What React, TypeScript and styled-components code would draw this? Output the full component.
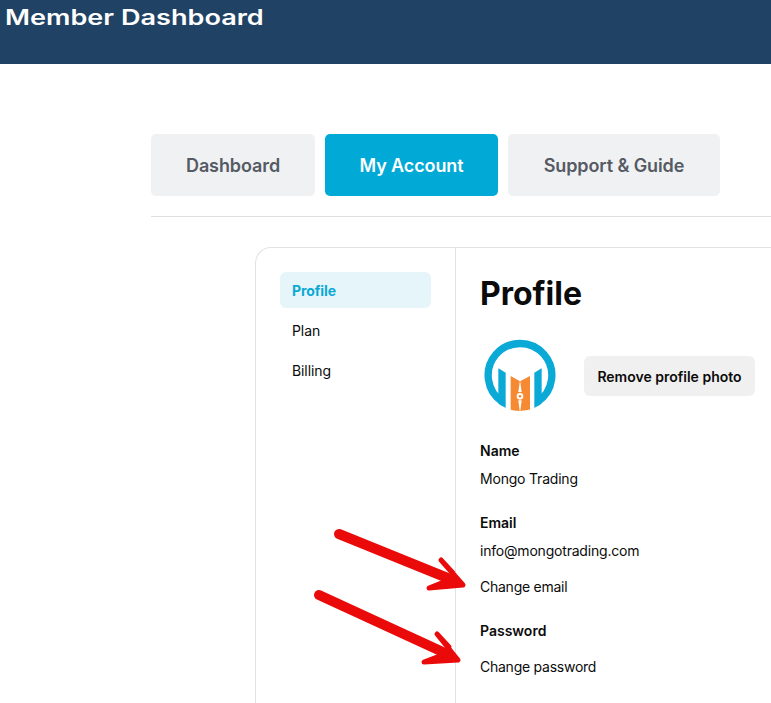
import styled, { createGlobalStyle } from 'styled-components'

const GlobalStyle = createGlobalStyle`
  html, body {
    margin: 0;
    padding: 0;
    background: #fff;
    overflow: hidden;
    font-family: Inter, "Liberation Sans", sans-serif;
  }
`
const Page = styled.div`
  position: relative;
  width: 771px;
  height: 703px;
  overflow: hidden;
`
const Header = styled.header`
  height: 64px;
  box-sizing: border-box;
  padding: 4px 0 0 5px;
  background-color: #1f4265;
`
const Title = styled.h1`
  margin: 0;
  font-family: Inter, sans-serif;
  font-size: 21px;
  line-height: 27px;
  font-weight: 600;
  color: #fff;
  white-space: nowrap;
  transform: scaleX(1.29);
  transform-origin: left center;
`
const Main = styled.main`
  padding: 70px 0 0 151px;
`
const Tabs = styled.nav`
  display: flex;
  gap: 10px;
  padding-bottom: 20px;
  border-bottom: 1px solid #dfdfdf;
`
const Tab = styled.a<{ $active?: boolean; $width: number }>`
  width: ${(p) => p.$width}px;
  height: 62px;
  display: flex;
  align-items: center;
  justify-content: center;
  border-radius: 5px;
  font-size: 18px;
  font-weight: 600;
  letter-spacing: -0.1px;
  background-color: ${(p) => (p.$active ? '#00a9d6' : '#f0f1f3')};
  color: ${(p) => (p.$active ? '#fff' : '#555a63')};
`
const Card = styled.section`
  display: flex;
  margin: 30px 0 0 104px;
  height: 500px;
  border: 1px solid #e2e2e2;
  border-right: 0;
  border-radius: 16px 0 0 0;
`
const Sidebar = styled.aside`
  width: 200px;
  flex-shrink: 0;
  box-sizing: border-box;
  padding: 24px 24px 0 24px;
  border-right: 1px solid #e2e2e2;
  display: flex;
  flex-direction: column;
  gap: 4px;
`
const SideItem = styled.a<{ $active?: boolean }>`
  height: 36px;
  display: flex;
  align-items: center;
  padding-left: 12px;
  border-radius: 6px;
  font-size: 14px;
  font-weight: ${(p) => (p.$active ? 700 : 400)};
  letter-spacing: -0.1px;
  color: ${(p) => (p.$active ? '#0aa9d4' : '#0b0b0b')};
  background-color: ${(p) => (p.$active ? '#e6f5fa' : 'transparent')};
`
const Content = styled.div`
  padding: 25px 0 0 24px;
`
const Heading = styled.h2`
  margin: 0;
  font-size: 32px;
  line-height: 42px;
  font-weight: 700;
  color: #0b0b0b;
`
const PhotoRow = styled.div`
  display: flex;
  align-items: center;
  gap: 24px;
  margin: 21px 0 25px;
`
const Logo = styled.svg`
  width: 80px;
  height: 80px;
  display: block;
`
const RemoveButton = styled.button`
  height: 40px;
  width: 171px;
  padding: 0;
  border: 0;
  border-radius: 6px;
  background-color: #f0f0f0;
  font-family: inherit;
  font-size: 14px;
  font-weight: 600;
  color: #0b0b0b;
`
const Label = styled.div`
  font-size: 14px;
  line-height: 20px;
  font-weight: 600;
  color: #0b0b0b;
`
const Value = styled.div`
  margin-top: 8px;
  font-size: 14px;
  line-height: 20px;
  letter-spacing: -0.2px;
  color: #0b0b0b;
`
const Group = styled.div`
  margin-bottom: 24px;
`
const ChangeLink = styled.a`
  display: block;
  margin-top: 16px;
  font-size: 14px;
  line-height: 20px;
  letter-spacing: -0.25px;
  color: #0b0b0b;
`
const Arrows = styled.svg`
  position: absolute;
  left: 0;
  top: 0;
  width: 771px;
  height: 703px;
  pointer-events: none;
`

export default function App() {
  return (
    <Page>
      <GlobalStyle />
      <Header>
        <Title>Member Dashboard</Title>
      </Header>
      <Main>
        <Tabs>
          <Tab $width={164}>Dashboard</Tab>
          <Tab $width={173} $active>
            My Account
          </Tab>
          <Tab $width={212}>Support &amp; Guide</Tab>
        </Tabs>
        <Card>
          <Sidebar>
            <SideItem $active>Profile</SideItem>
            <SideItem>Plan</SideItem>
            <SideItem>Billing</SideItem>
          </Sidebar>
          <Content>
            <Heading>Profile</Heading>
            <PhotoRow>
              <Logo viewBox="0 0 240 240">
                <defs>
                  <clipPath id="logoClip">
                    <circle cx="120" cy="118" r="107" />
                  </clipPath>
                </defs>
                <path
                  d="M68 198A95.5 95.5 0 1 1 172 198"
                  fill="none"
                  stroke="#0ba9d6"
                  strokeWidth="22"
                />
                <g clipPath="url(#logoClip)">
                  <path d="M55 97L77 110V240H55Z" fill="#0ba9d6" />
                  <path d="M185 97L163 110V240H185Z" fill="#0ba9d6" />
                  <path d="M92 120L120 136L150 120V240H92Z" fill="#f58a33" />
                  <path d="M120 132L125 168H115Z" fill="#fff" />
                  <circle cx="120" cy="181" r="7" fill="#f58a33" stroke="#fff" strokeWidth="6" />
                  <path d="M115 193H125L120 232Z" fill="#fff" />
                </g>
              </Logo>
              <RemoveButton>Remove profile photo</RemoveButton>
            </PhotoRow>
            <Group>
              <Label>Name</Label>
              <Value>Mongo Trading</Value>
            </Group>
            <Group>
              <Label>Email</Label>
              <Value>info@mongotrading.com</Value>
              <ChangeLink>Change email</ChangeLink>
            </Group>
            <Group>
              <Label>Password</Label>
              <ChangeLink>Change password</ChangeLink>
            </Group>
          </Content>
        </Card>
      </Main>
      <Arrows viewBox="0 0 771 703">
        <g fill="#ea0a0a" stroke="#ea0a0a" strokeLinecap="round" strokeLinejoin="round">
          <path d="M339 534L450 579" strokeWidth="10" />
          <path d="M441 560L463 585L429 588L449 580L453 573Z" strokeWidth="5" />
          <path d="M319 595L445 653" strokeWidth="10" />
          <path d="M437 634L458 660L424 662L445 654L449 647Z" strokeWidth="5" />
        </g>
      </Arrows>
    </Page>
  )
}
